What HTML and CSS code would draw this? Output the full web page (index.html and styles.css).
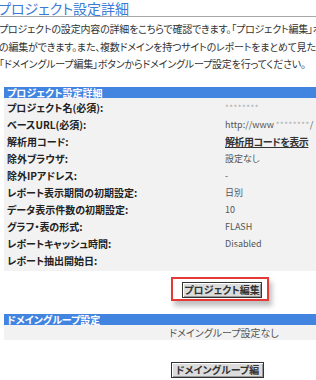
FILE: index.html
```html
<!DOCTYPE html>
<html lang="ja">
<head>
    <meta charset="UTF-8">
    <title>プロジェクト設定詳細</title>
    <link rel="stylesheet" href="styles.css">
</head>
<body>
    <h1 class="page-title">プロジェクト設定詳細</h1>

    <p class="intro">
        プロジェクトの設定内容の詳細をこちらで確認できます。「プロジェクト編集」ボタンからプロジェクト設定<br>
        の編集ができます。また、複数ドメインを持つサイトのレポートをまとめて見たい場合は<br>
        「ドメイングループ編集」ボタンからドメイングループ設定を行ってください。
    </p>

    <div class="section">
        <div class="section-head">プロジェクト設定詳細</div>
        <div class="section-body">
            <div class="row"><span class="label">プロジェクト名(必須):</span><span class="value masked">********</span></div>
            <div class="row"><span class="label">ベースURL(必須):</span><span class="value">http://www <span class="masked">********</span>/</span></div>
            <div class="row"><span class="label">解析用コード:</span><span class="value"><a class="code-link" href="#">解析用コードを表示</a></span></div>
            <div class="row"><span class="label">除外ブラウザ:</span><span class="value">設定なし</span></div>
            <div class="row"><span class="label">除外IPアドレス:</span><span class="value">-</span></div>
            <div class="row"><span class="label">レポート表示期間の初期設定:</span><span class="value">日別</span></div>
            <div class="row"><span class="label">データ表示件数の初期設定:</span><span class="value">10</span></div>
            <div class="row"><span class="label">グラフ・表の形式:</span><span class="value">FLASH</span></div>
            <div class="row"><span class="label">レポートキャッシュ時間:</span><span class="value">Disabled</span></div>
            <div class="row"><span class="label">レポート抽出開始日:</span><span class="value"></span></div>
        </div>

        <div class="actions">
            <div class="highlight">
                <button class="btn btn-project">プロジェクト編集</button>
            </div>
        </div>

        <div class="section-head group-head">ドメイングループ設定</div>
        <div class="group-body">ドメイングループ設定なし</div>

        <div class="actions actions-group">
            <button class="btn btn-group">ドメイングループ編集</button>
        </div>
    </div>
</body>
</html>
```

FILE: styles.css
```css
html, body {
    overflow: hidden;
}

body {
    margin: 0;
    width: 460px;
    font-family: "Noto Sans CJK JP", sans-serif;
    font-feature-settings: "palt";
    font-size: 10px;
    color: #333;
    background-color: white;
}

.page-title {
    margin: 0 0 0 -2px;
    font-size: 14px;
    font-weight: normal;
    line-height: 16px;
    color: #3b7bd6;
    border-bottom: 1px solid #a8a8a8;
    width: 320px;
}

.intro {
    margin: 3px 0 0 -1px;
    line-height: 17.5px;
    font-size: 10px;
    letter-spacing: -0.2px;
    color: #333;
    white-space: nowrap;
}

.section {
    margin: 14px 0 0 4px;
    width: 440px;
}

.section-head {
    background-color: #4285e0;
    color: white;
    font-weight: bold;
    height: 11px;
    line-height: 11px;
    padding-left: 3px;
    font-size: 10px;
}

.section-body {
    background-color: #f2f2f2;
    padding: 1px 0 2px;
}

.row {
    display: grid;
    grid-template-columns: 221px 1fr;
    height: 17px;
    line-height: 17px;
}

.label {
    padding-left: 3px;
    font-weight: bold;
    color: #222;
}

.value {
    color: #555;
    font-size: 9px;
}

.masked {
    color: #aaa;
    font-size: 8px;
    letter-spacing: 0.5px;
}

.code-link {
    color: #333;
    font-weight: bold;
    font-size: 10px;
    letter-spacing: -0.5px;
    text-decoration: underline;
}

.actions {
    display: flex;
    margin-top: 6px;
    padding-left: 167px;
}

.highlight {
    border: 2px solid #e53935;
    padding: 3px 5px 1px 9px;
    box-shadow: 3px 5px 5px rgba(0, 0, 0, 0.25);
}

.btn {
    display: block;
    height: 16px;
    padding: 0;
    font-family: "Noto Sans CJK JP", sans-serif;
    font-feature-settings: "palt";
    font-size: 10px;
    font-weight: bold;
    line-height: 14px;
    color: #333;
    background-color: #dcdcdc;
    border: 1px solid #333;
    box-shadow: inset 1px 1px 0 #fff, inset -1px -1px 0 #999;
}

.btn-project {
    width: 80px;
}

.btn-group {
    width: 93px;
}

.group-head {
    margin-top: 13px;
}

.group-body {
    background-color: #f2f2f2;
    height: 15px;
    line-height: 15px;
    text-align: center;
    color: #555;
    font-size: 10px;
}

.actions-group {
    margin-top: 22px;
}
```
